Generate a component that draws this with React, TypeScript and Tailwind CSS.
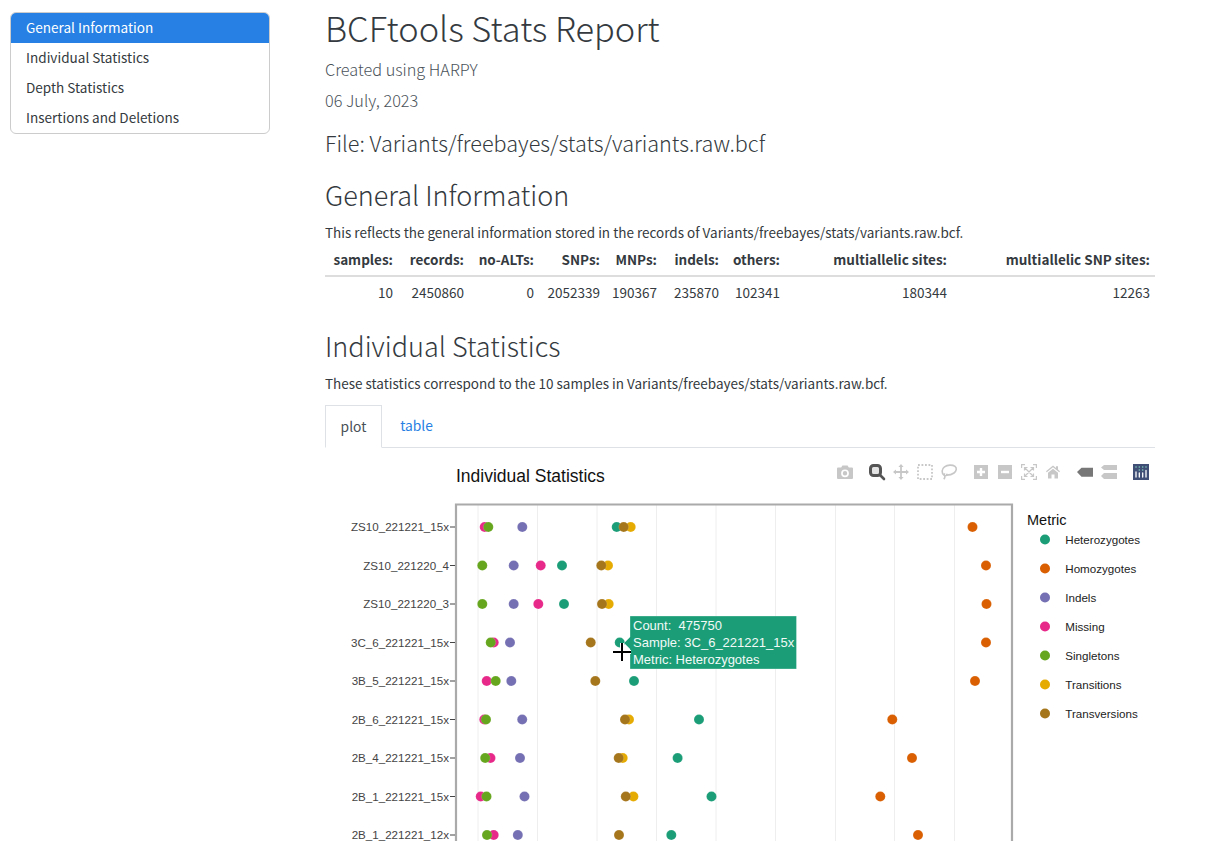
const navItems = ["General Information", "Individual Statistics", "Depth Statistics", "Insertions and Deletions"];

const columns = [
	{ label: "samples:", value: "10", width: "w-[72px]", pad: "pr-[4px]" },
	{ label: "records:", value: "2450860", width: "w-[71px]", pad: "pr-[4px]" },
	{ label: "no-ALTs:", value: "0", width: "w-[70px]", pad: "pr-[4px]" },
	{ label: "SNPs:", value: "2052339", width: "w-[66px]", pad: "pr-[4px]" },
	{ label: "MNPs:", value: "190367", width: "w-[57px]", pad: "pr-[4px]" },
	{ label: "indels:", value: "235870", width: "w-[62px]", pad: "pr-[4px]" },
	{ label: "others:", value: "102341", width: "w-[61px]", pad: "pr-[4px]" },
	{ label: "multiallelic sites:", value: "180344", width: "w-[167px]", pad: "pr-[4px]" },
	{ label: "multiallelic SNP sites:", value: "12263", width: "w-[204px]", pad: "pr-[5px]" },
];

const metrics = [
	{ name: "Heterozygotes", color: "#1b9e77" },
	{ name: "Homozygotes", color: "#d95f02" },
	{ name: "Indels", color: "#7570b3" },
	{ name: "Missing", color: "#e7298a" },
	{ name: "Singletons", color: "#66a61e" },
	{ name: "Transitions", color: "#e6ab02" },
	{ name: "Transversions", color: "#a6761d" },
];

// x of each metric, same order as metrics
const samples = [
	{ name: "ZS10_221221_15x", y: 527, xs: [616.7, 972.5, 522.3, 484.7, 488.3, 630.7, 623.7] },
	{ name: "ZS10_221220_4", y: 565.5, xs: [562, 986, 513.7, 540.7, 482.3, 608, 601.3] },
	{ name: "ZS10_221220_3", y: 604, xs: [564, 986.5, 513.7, 538.3, 482.3, 608.7, 602] },
	{ name: "3C_6_221221_15x", y: 642.5, xs: [619.7, 986, 510, 493.7, 490.7, null, 590.7] },
	{ name: "3B_5_221221_15x", y: 681, xs: [634, 975, 511.3, 486.7, 495.7, null, 595.3] },
	{ name: "2B_6_221221_15x", y: 719.5, xs: [699, 892.3, 522.2, 484.3, 486, 629, 625] },
	{ name: "2B_4_221221_15x", y: 758, xs: [677.6, 912, 520, 490.5, 485.2, 622.7, 618.7] },
	{ name: "2B_1_221221_15x", y: 796.5, xs: [711.5, 880.3, 524.5, 480.7, 486.5, 633.4, 625.8] },
	{ name: "2B_1_221221_12x", y: 835, xs: [671.3, 918, 517.8, 493.7, 487, null, 619] },
];

const gridLines = [478, 537.5, 597, 656.5, 716, 775.5, 835.5, 894.5, 954.5];

function ModeBar() {
	return (
		<g>
			{/* camera */}
			<g transform="translate(837 465)" fill="#c7c7c7">
				<path fillRule="evenodd" d="M1 2.5h3.2L5.4.5h5.2l1.2 2H15a1 1 0 0 1 1 1V13a1 1 0 0 1-1 1H1a1 1 0 0 1-1-1V3.5a1 1 0 0 1 1-1ZM8 4.4a3.9 3.9 0 1 0 0 7.8 3.9 3.9 0 0 0 0-7.8Zm0 1.7a2.2 2.2 0 1 1 0 4.4 2.2 2.2 0 0 1 0-4.4Z" />
			</g>
			{/* zoom */}
			<g transform="translate(869 464)">
				<rect x="1.5" y="1.5" width="10" height="10" rx="3" fill="#e4e4e4" stroke="#555555" strokeWidth="3" />
				<path d="M11 11l4 4" stroke="#555555" strokeWidth="2.6" strokeLinecap="round" />
			</g>
			{/* pan */}
			<g transform="translate(893 464)" fill="#c7c7c7">
				<path d="M8 0l2.6 3H8.9v4.1H13V5.4L16 8l-3 2.6V8.9H8.9v4.2h1.7L8 16l-2.6-2.9h1.7V8.9H3v1.7L0 8l3-2.6v1.7h4.1V3H5.4Z" />
			</g>
			{/* box select */}
			<rect x="918" y="465" width="14" height="14" fill="none" stroke="#c7c7c7" strokeWidth="1.8" strokeDasharray="1.8 1.7" />
			{/* lasso */}
			<g transform="translate(941 464)" fill="none" stroke="#c7c7c7" strokeWidth="1.6">
				<path d="M3 11.2C.4 9 .5 5 3.5 2.8 6.5.6 11.5.6 14 2.4c2.2 1.7 1.4 4.8-1 6.6-2.2 1.6-5.5 2.2-8 2.1" />
				<path d="M5.5 9.8c1 1-.2 2.3-1.6 1.9-1.3-.4-.9-1.8.3-1.900M3.800 11.800c.3 1.200-.1 2.400-1 3.400" />
			</g>
			{/* zoom in */}
			<g transform="translate(974 465)">
				<rect width="14" height="14" fill="#c7c7c7" />
				<path d="M7 3v8M3 7h8" stroke="#fff" strokeWidth="2.4" />
			</g>
			{/* zoom out */}
			<g transform="translate(998 465)">
				<rect width="14" height="14" fill="#c7c7c7" />
				<path d="M3 7h8" stroke="#fff" strokeWidth="2.4" />
			</g>
			{/* autoscale */}
			<g transform="translate(1021 464)" fill="none" stroke="#c7c7c7" strokeWidth="1.2">
				<path d="M.6 4V.6H4M12 .6h3.4V4M15.4 12v3.4H12M4 15.4H.6V12" />
				<path d="M4 4l8 8M12 4l-8 8M3.5 6.5v-3h3M12.5 6.5v-3h-3M12.5 9.5v3h-3M3.5 9.5v3h3" />
			</g>
			{/* home */}
			<g transform="translate(1046 465)" fill="#c7c7c7">
				<path d="M7 .5l3 2.4V1.3h2v3.2l2 1.7-.8 1L7 2.2.8 7.2 0 6.2Z" />
				<path d="M7 3.7l5 4.1v5.6H8.5V9.5h-3v3.9H2V7.800Z" />
			</g>
			{/* hover closest */}
			<path d="M1077 472l4.5-4.3H1093v9h-11.5Z" fill="#777" />
			{/* hover compare */}
			<g fill="#c7c7c7">
				<path d="M1101 467.5l3-2.5h13v5h-13Z" />
				<path d="M1101 476l3-3h13v6h-13Z" />
			</g>
			{/* plotly logo */}
			<g transform="translate(1133 464)">
				<rect width="16" height="16" fill="#3f4f75" />
				<g fill="#80cfbe">
					<circle cx="3" cy="3" r="0.8" />
					<circle cx="6.3" cy="3" r="0.8" />
					<circle cx="9.7" cy="3" r="0.8" />
					<circle cx="13" cy="3" r="0.8" />
					<circle cx="6.3" cy="6" r="0.8" />
					<circle cx="9.7" cy="6" r="0.8" />
				</g>
				<g stroke="#fff" strokeWidth="1.3" strokeLinecap="round">
					<path d="M3 8v5M6.3 9v4M9.7 9v4M13 6.5v6.5" />
				</g>
			</g>
		</g>
	);
}

function Plot() {
	return (
		<svg viewBox="325 448 830 393" className="block w-[830px] h-[393px] font-['Liberation_Sans',Arial,sans-serif]">
			<text x="456" y="482" fontSize="17.5" fill="#111">
				Individual Statistics
			</text>
			<ModeBar />

			{gridLines.map((x) => (
				<line key={x} x1={x} x2={x} y1="505" y2="841" stroke="#eeeeee" />
			))}
			<path d="M456 841V504.5H1012V841" fill="none" stroke="#aaaaaa" strokeWidth="2.2" />

			{samples.map((s) => (
				<g key={s.name}>
					<line x1="450" x2="455" y1={s.y} y2={s.y} stroke="#444" />
					<text x="449" y={s.y + 4} fontSize="11.6" fill="#444" textAnchor="end">
						{s.name}
					</text>
				</g>
			))}

			{metrics.map((m, i) => (
				<g key={m.name}>
					{samples.map((s) =>
						s.xs[i] === null ? null : (
							<circle key={s.name} cx={s.xs[i] as number} cy={s.y} r="5" fill={m.color} stroke="#fff" strokeOpacity="0.25" strokeWidth="0.5" />
						),
					)}
				</g>
			))}

			<text x="1027" y="525" fontSize="14.5" fill="#111">
				Metric
			</text>
			{metrics.map((m, i) => (
				<g key={m.name}>
					<circle cx="1045" cy={539.5 + i * 29} r="5" fill={m.color} />
					<text x="1065.3" y={544 + i * 29} fontSize="11.6" fill="#222">
						{m.name}
					</text>
				</g>
			))}

			{/* hover label */}
			<path d="M630 616H796.5V669H630V649L624 643L630 637Z" fill="#1b9e77" stroke="#ffffff" strokeOpacity="0.5" strokeWidth="0.6" />
			<g fontSize="13" fill="#ffffff" opacity="0.95">
				<text x="633" y="629.5" xmlSpace="preserve">Count:  475750</text>
				<text x="633" y="646.7">Sample: 3C_6_221221_15x</text>
				<text x="633" y="664">Metric: Heterozygotes</text>
			</g>

			{/* crosshair cursor */}
			<path d="M622 643v18M613 652h18" stroke="#fff" strokeWidth="4" />
			<path d="M622 643v18M613 652h18" stroke="#000" strokeWidth="2" />
		</svg>
	);
}

export default function App() {
	return (
		<div className="h-[841px] w-[1228px] overflow-hidden bg-white font-['Noto_Sans_CJK_SC',sans-serif] text-[#343a40]">
			<div className="flex">
				<nav className="ml-[10px] mt-[12px] w-[260px] self-start overflow-hidden rounded-md border border-[#cccccc] text-[13.55px]">
					{navItems.map((item, i) => (
						<div key={item} className={i === 0 ? "h-[30px] bg-[#2780e3] pl-[15px] leading-[28px] text-white" : "h-[30px] pl-[15px] leading-[28px] text-[#343a40]"}>
							{item}
						</div>
					))}
				</nav>

				<main className="ml-[55px] w-[830px]">
					<h1 className="h-[57px] text-[34.4px] font-light leading-[54px]">BCFtools Stats Report</h1>
					<p className="h-[24px] text-[16.25px] font-light leading-[24px] text-[#4a5259]">Created using HARPY</p>
					<p className="mt-[7px] h-[24px] text-[16.25px] font-light leading-[24px] text-[#4a5259]">06 July, 2023</p>
					<h4 className="mt-[12px] h-[38px] text-[21.6px] font-light leading-[38px]">File: Variants/freebayes/stats/variants.raw.bcf</h4>
					<h2 className="mt-[12px] h-[42px] text-[27px] font-light leading-[42px]">General Information</h2>
					<p className="mt-[4px] h-[24px] text-[13.5px] leading-[24px]">This reflects the general information stored in the records of Variants/freebayes/stats/variants.raw.bcf.</p>

					<table className="w-[830px] table-fixed border-collapse text-[13.5px]">
						<thead>
							<tr className="h-[32px] border-b-2 border-[#dddddd]">
								{columns.map((c) => (
									<th key={c.label} className={`${c.width} ${c.pad} whitespace-nowrap pb-[1px] text-right font-bold`}>
										{c.label}
									</th>
								))}
							</tr>
						</thead>
						<tbody>
							<tr className="h-[32px]">
								{columns.map((c) => (
									<td key={c.label} className={`${c.pad} pb-[1px] text-right`}>
										{c.value}
									</td>
								))}
							</tr>
						</tbody>
					</table>

					<h2 className="mt-[17px] h-[42px] text-[27px] font-light leading-[42px]">Individual Statistics</h2>
					<p className="mt-[4px] h-[24px] text-[13.5px] leading-[24px]">These statistics correspond to the 10 samples in Variants/freebayes/stats/variants.raw.bcf.</p>

					<div className="mt-[10px] flex h-[43px] border-b border-[#dee2e6] text-[13.8px]">
						<div className="h-[43px] w-[57px] border border-b-white border-[#dee2e6] text-center leading-[41px] text-[#495057]">plot</div>
						<div className="w-[69px] text-center leading-[41px] text-[#2780e3]">table</div>
					</div>
					<Plot />
				</main>
			</div>
		</div>
	);
}
